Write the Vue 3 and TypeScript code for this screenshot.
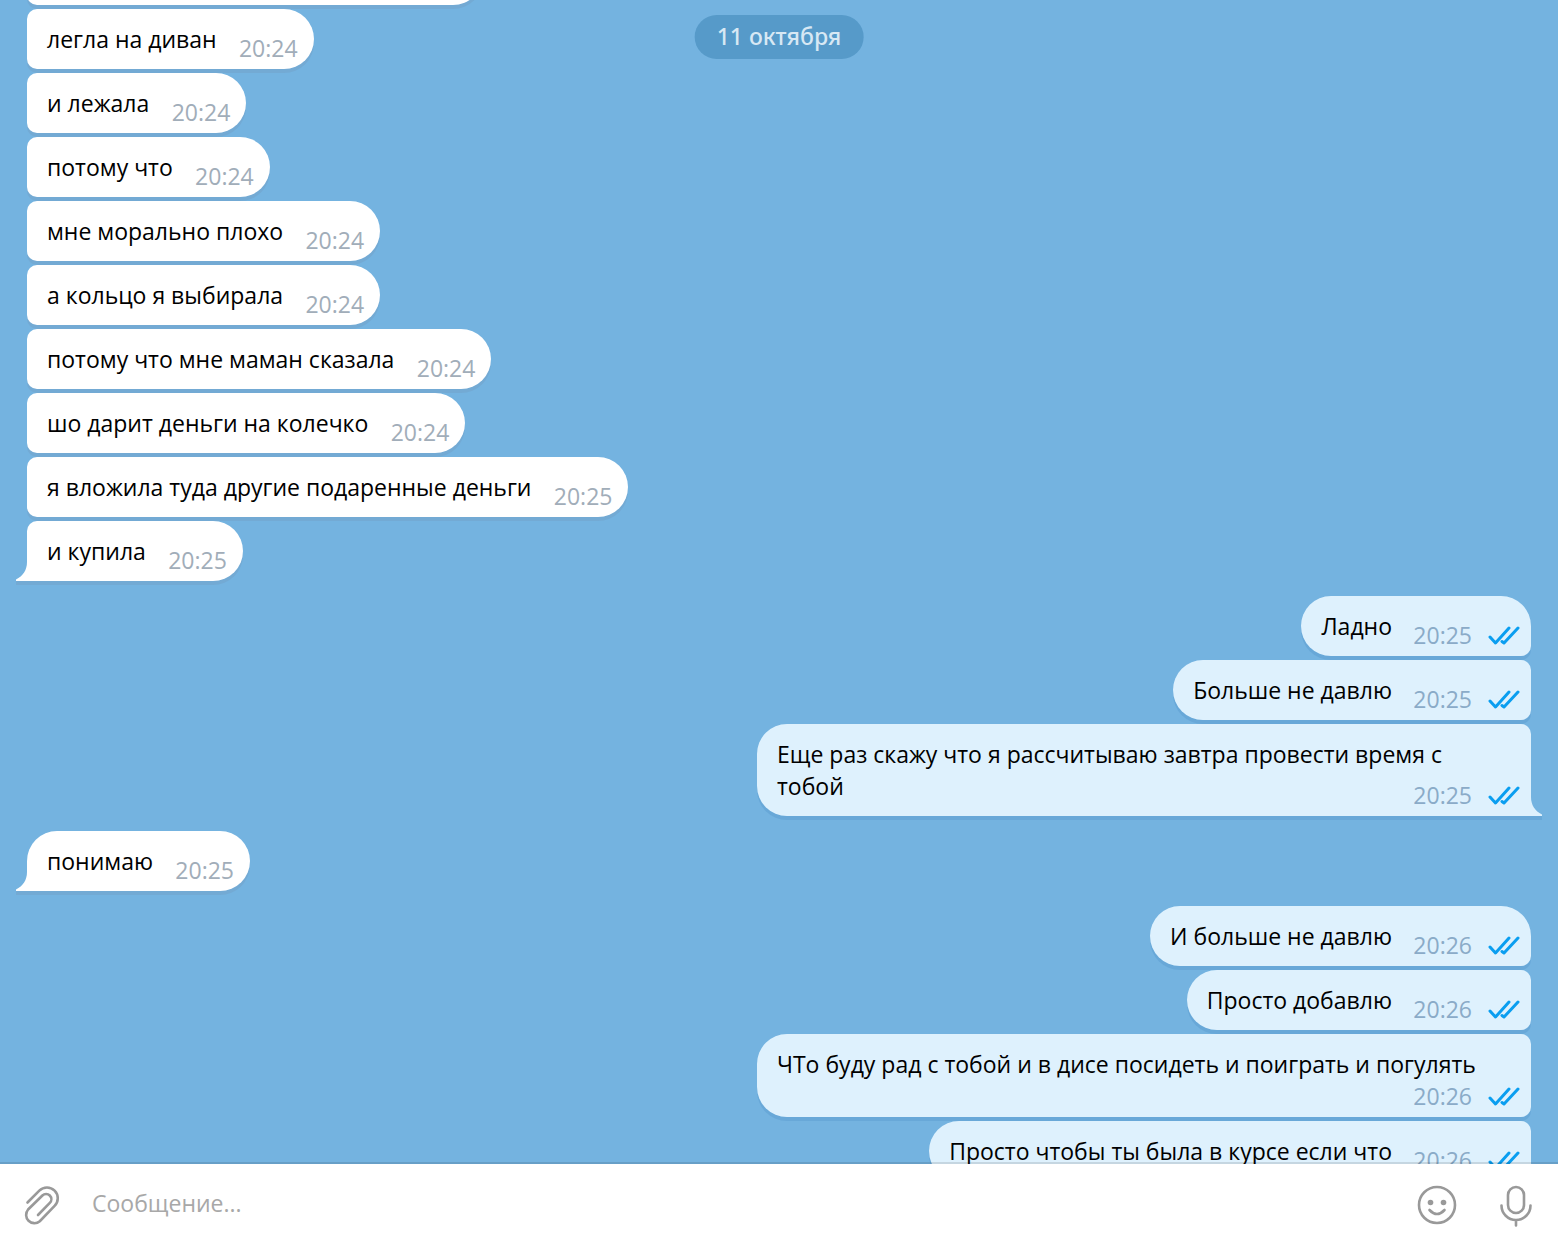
<script setup lang="ts">
import { onMounted, ref } from 'vue'

interface Message {
  text: string
  time: string
}

interface Group {
  side: 'in' | 'out'
  messages: Message[]
}

const groups: Group[] = [
  {
    side: 'in',
    messages: [
      { text: '', time: '' },
      { text: 'легла на диван', time: '20:24' },
      { text: 'и лежала', time: '20:24' },
      { text: 'потому что', time: '20:24' },
      { text: 'мне морально плохо', time: '20:24' },
      { text: 'а кольцо я выбирала', time: '20:24' },
      { text: 'потому что мне маман сказала', time: '20:24' },
      { text: 'шо дарит деньги на колечко', time: '20:24' },
      { text: 'я вложила туда другие подаренные деньги', time: '20:25' },
      { text: 'и купила', time: '20:25' },
    ],
  },
  {
    side: 'out',
    messages: [
      { text: 'Ладно', time: '20:25' },
      { text: 'Больше не давлю', time: '20:25' },
      { text: 'Еще раз скажу что я рассчитываю завтра провести время с тобой', time: '20:25' },
    ],
  },
  { side: 'in', messages: [{ text: 'понимаю', time: '20:25' }] },
  {
    side: 'out',
    messages: [
      { text: 'И больше не давлю', time: '20:26' },
      { text: 'Просто добавлю', time: '20:26' },
      { text: 'ЧТо буду рад с тобой и в дисе посидеть и поиграть и погулять', time: '20:26' },
      { text: 'Просто чтобы ты была в курсе если что', time: '20:26' },
    ],
  },
]

const draft = ref('')
const history = ref<HTMLElement | null>(null)

onMounted(() => {
  if (history.value) history.value.scrollTop = 55
})
</script>

<template>
  <div class="chat">
    <main class="pane">
      <div class="date">11 октября</div>
      <div ref="history" class="history">
        <section v-for="(group, g) in groups" :key="g" class="group" :class="group.side">
          <article
            v-for="(message, m) in group.messages"
            :key="m"
            class="bubble"
            :class="{ blank: !message.text }"
          >
            <p class="text">{{ message.text }}</p>
            <div v-if="message.time" class="meta">
              <time>{{ message.time }}</time>
              <svg v-if="group.side === 'out'" class="checks" viewBox="0 0 32 20">
                <path d="M2 12l5.500 6L21 3M14 16.500l2 1.500L30 3" />
              </svg>
            </div>
            <svg v-if="m === group.messages.length - 1" class="tail" viewBox="0 0 12 28">
              <path class="tail-shadow" d="M0 24h11v4H0z" />
              <path d="M12 0H11V5C11 13 7 19 0 22.5V24h12z" />
            </svg>
          </article>
        </section>
      </div>
    </main>
    <form class="composer" @submit.prevent>
      <button type="button" class="icon" aria-label="Прикрепить">
        <svg width="36" height="42" viewBox="0 0 36 42">
          <path
            d="M3.5 18.5L15.300 6.600A10.800 10.800 0 0 1 30.600 21.900L15.800 37.200A8.300 8.300 0 0 1 4.100 25.500L18.400 11.500A5.200 5.200 0 0 1 25.800 18.900L14 31"
          />
        </svg>
      </button>
      <input v-model="draft" type="text" aria-label="Сообщение" placeholder="Сообщение..." />
      <button type="button" class="icon emoji" aria-label="Эмодзи">
        <svg width="40" height="40" viewBox="0 0 40 40">
          <circle cx="20" cy="20" r="18" />
          <circle class="dot" cx="13.5" cy="17.5" r="2.8" />
          <circle class="dot" cx="26.5" cy="17.5" r="2.8" />
          <path d="M12.5 25Q20 33 27.5 25" />
        </svg>
      </button>
      <button type="button" class="icon" aria-label="Голосовое сообщение">
        <svg width="34" height="44" viewBox="0 0 34 44">
          <rect x="9" y="4" width="16" height="26" rx="8" />
          <path d="M2.5 22.500A14.500 14.500 0 0 0 31.500 22.500M17 37v5.500" />
        </svg>
      </button>
    </form>
  </div>
</template>

<style>
body {
  margin: 0;
}
</style>

<style scoped>
.chat {
  display: flex;
  flex-direction: column;
  height: 100vh;
  overflow: hidden;
  background: #74b3e0;
  font-family: 'Open Sans', 'Noto Sans', sans-serif;
  font-size: 23px;
  line-height: 32px;
  color: #000;
}

.pane {
  position: relative;
  flex: 1;
  min-height: 0;
}

.date {
  position: absolute;
  z-index: 2;
  top: 15px;
  left: 50%;
  transform: translateX(-50%);
  padding: 5px 22px 7px;
  border-radius: 22px;
  background: #569ac9;
  color: #d7e8f4;
  font-family: 'Noto Sans', 'Open Sans', sans-serif;
  font-weight: 500;
  white-space: nowrap;
}

.history {
  box-sizing: border-box;
  display: flex;
  flex-direction: column;
  gap: 15px;
  height: 100%;
  padding: 0 27px 16px;
  overflow-y: auto;
  scrollbar-width: none;
}

.group {
  display: flex;
  flex-direction: column;
  flex-shrink: 0;
  align-items: flex-start;
  gap: 4px;
}

.group.out {
  align-items: flex-end;
}

.bubble {
  position: relative;
  box-sizing: border-box;
  max-width: 774px;
  min-height: 60px;
  padding: 14px 20px;
  border-radius: 10px 30px 30px 10px;
  background: #fff;
  box-shadow: 0 4px 0 #73aad4;
}

.blank {
  width: 456px;
}

.in .bubble:first-child {
  border-top-left-radius: 30px;
}

.in .bubble:last-child {
  border-bottom-left-radius: 0;
}

.out .bubble {
  border-radius: 30px 10px 10px 30px;
  background: #def1fd;
  box-shadow: 0 4px 0 #68a8d8;
}

.out .bubble:first-child {
  border-top-right-radius: 30px;
}

.out .bubble:last-child {
  border-bottom-right-radius: 0;
}

.text {
  display: flow-root;
  margin: 0;
}

/* Keeps room for the time on the last line of the text */
.text::after {
  content: '';
  float: right;
  width: 77px;
  height: 23px;
}

.out .text::after {
  width: 119px;
}

.meta {
  position: absolute;
  right: 16px;
  bottom: 5px;
  display: flex;
  align-items: center;
  gap: 16px;
  color: #a1adb9;
}

.out .meta {
  right: 11px;
  color: #8aabc8;
}

.checks {
  width: 32px;
  height: 20px;
  fill: none;
  stroke: #0a9ef0;
  stroke-width: 3;
  stroke-linecap: round;
  stroke-linejoin: round;
}

.tail {
  position: absolute;
  left: -11px;
  bottom: -4px;
  width: 12px;
  height: 28px;
  fill: #fff;
}

.tail-shadow {
  fill: #73aad4;
}

.out .tail {
  left: auto;
  right: -11px;
  transform: scaleX(-1);
  fill: #def1fd;
}

.out .tail-shadow {
  fill: #68a8d8;
}

.composer {
  position: relative;
  z-index: 3;
  display: flex;
  align-items: center;
  height: 81px;
  background: #fff;
  box-shadow: 0 -2px 0 rgba(0, 0, 0, 0.11);
}

.icon {
  display: flex;
  align-items: center;
  justify-content: center;
  width: 84px;
  height: 80px;
  padding: 0;
  border: 0;
  background: none;
}

.icon.emoji {
  width: 74px;
}

.icon svg {
  fill: none;
  stroke: #999;
  stroke-width: 2.600;
  stroke-linecap: round;
}

.icon .dot {
  fill: #999;
  stroke: none;
}

.composer input {
  flex: 1;
  min-width: 0;
  padding: 0 8px 4px;
  border: 0;
  outline: 0;
  background: none;
  font: inherit;
  color: #000;
}

.composer input::placeholder {
  color: #a8a8a8;
  opacity: 1;
}
</style>
